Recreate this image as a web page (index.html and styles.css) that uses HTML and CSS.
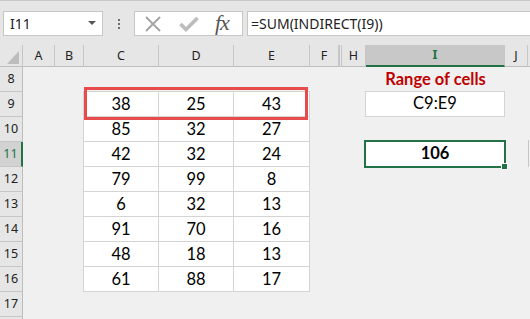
FILE: index.html
```html
<!DOCTYPE html>
<html lang="en">
<head>
	<meta charset="UTF-8">
	<title>INDIRECT range</title>
	<link rel="stylesheet" href="styles.css">
</head>
<body>
	<div class="toolbar">
		<div class="namebox">I11<span class="caret"></span></div>
		<div class="grip"><i></i><i></i><i></i></div>
		<div class="fxbar">
			<svg class="cancel" width="18" height="16" viewBox="0 0 18 16"><path d="M2 1 L16 15 M16 1 L2 15" stroke="#a6a6a6" stroke-width="2" fill="none"/></svg>
			<svg class="enter" width="20" height="16" viewBox="0 0 20 16"><path d="M1.5 8 L7 13.5 L18.5 2" stroke="#bcbcbc" stroke-width="3.6" fill="none"/></svg>
			<span class="fx">fx</span>
		</div>
		<div class="formula">=SUM(INDIRECT(I9))</div>
	</div>

	<div class="heads cols">
		<div class="corner"><span></span></div>
		<div>A</div>
		<div>B</div>
		<div>C</div>
		<div>D</div>
		<div>E</div>
		<div>F</div>
		<div class="hid"></div>
		<div>H</div>
		<div class="sel">I</div>
		<div>J</div>
		<div class="rest"></div>
	</div>

	<div class="sheet cols">
		<div class="rh">8</div>
		<div class="rh">9</div>
		<div class="rh">10</div>
		<div class="rh sel">11</div>
		<div class="rh">12</div>
		<div class="rh">13</div>
		<div class="rh">14</div>
		<div class="rh">15</div>
		<div class="rh">16</div>
		<div class="rh">17</div>
		<div class="rh"></div>

		<div class="data">
			<div>38</div><div>25</div><div>43</div>
			<div>85</div><div>32</div><div>27</div>
			<div>42</div><div>32</div><div>24</div>
			<div>79</div><div>99</div><div>8</div>
			<div>6</div><div>32</div><div>13</div>
			<div>91</div><div>70</div><div>16</div>
			<div>48</div><div>18</div><div>13</div>
			<div>61</div><div>88</div><div>17</div>
		</div>
		<div class="mark"></div>

		<div class="label">Range of cells</div>
		<div class="ref">C9:E9</div>
		<div class="result">106<span class="handle"></span></div>
		<div class="edge"></div>
	</div>
</body>
</html>
```

FILE: styles.css
```css
*{
	box-sizing: border-box;
}
body{
	margin: 0;
	width: 530px;
	height: 319px;
	overflow: hidden;
	background: #f0f0f0;
	font-family: "Noto Sans", "Open Sans", sans-serif;
}

/* formula bar */
.toolbar{
	display: flex;
	align-items: flex-start;
	height: 45px;
	padding: 10px 0 0 3px;
	border-top: 1px solid #c8c8c8;
	background: #e6e6e6;
}
.namebox{
	position: relative;
	width: 100px;
	height: 25px;
	padding: 2px 0 0 6px;
	border: 1px solid #c6c6c6;
	background: #fff;
	font-size: 14px;
	color: #222;
}
.caret{
	position: absolute;
	top: 9px;
	right: 6px;
	border-left: 4px solid transparent;
	border-right: 4px solid transparent;
	border-top: 4px solid #595959;
}
.grip{
	display: flex;
	flex-direction: column;
	gap: 2px;
	margin: 8px 0 0 15px;
}
.grip i{
	width: 2px;
	height: 2px;
	background: #6f6f6f;
}
.fxbar{
	display: flex;
	align-items: center;
	width: 109px;
	height: 25px;
	margin-left: 14px;
	padding-left: 9px;
	border: 1px solid #c6c6c6;
	background: #fff;
}
.enter{
	margin-left: 17px;
}
.fx{
	margin: -2px 0 0 16px;
	font-family: "Liberation Serif", serif;
	font-style: italic;
	font-size: 22px;
	color: #555;
	letter-spacing: -1px;
}
.formula{
	flex: 1;
	height: 25px;
	margin-left: 4px;
	padding: 2px 0 0 3px;
	border: 1px solid #c6c6c6;
	border-right: none;
	background: #fff;
	font-size: 14px;
	color: #222;
}

/* sheet columns */
.cols{
	display: grid;
	grid-template-columns: 23px 32px 29px 75px 75px 76px 29px 3px 24px 139px 23px 1fr;
}
.heads{
	height: 22px;
	background: #e6e6e6;
	border-bottom: 1px solid #bdbdbd;
}
.heads div{
	border-right: 1px solid #c6c6c6;
	text-align: center;
	font-size: 12.5px;
	line-height: 21px;
	color: #222;
}
.heads .hid{
	border-left: 1px solid #c6c6c6;
}
.heads .rest{
	border-right: none;
}
.heads .sel{
	background: #c8c8c8;
	border-bottom: 2px solid #217346;
	color: #217346;
	font-weight: bold;
	line-height: 20px;
}
.corner{
	position: relative;
}
.corner span{
	position: absolute;
	right: 3px;
	bottom: 3px;
	border-left: 12px solid transparent;
	border-bottom: 13px solid #bdbdbd;
}

.sheet{
	grid-template-rows: repeat(11, 25px);
}
.rh{
	grid-column: 1;
	border-right: 1px solid #bdbdbd;
	border-bottom: 1px solid #c6c6c6;
	background: #e6e6e6;
	text-align: center;
	font-size: 12.5px;
	line-height: 24px;
	color: #222;
}
.rh.sel{
	background: #d2d2d2;
	border-right: 2px solid #217346;
	color: #217346;
}

/* data block C9:E16 */
.data{
	grid-column: 4 / 7;
	grid-row: 2 / 10;
	display: grid;
	grid-template-columns: 75px 75px 76px;
	grid-template-rows: repeat(8, 25px);
	margin: -1px 0 0 -1px;
	border-left: 1px solid #d4d4d4;
	border-top: 1px solid #d4d4d4;
	background: #fff;
}
.data div{
	border-right: 1px solid #d4d4d4;
	border-bottom: 1px solid #d4d4d4;
	text-align: center;
	font-family: "Lato", sans-serif;
	font-size: 16.5px;
	line-height: 24px;
	color: #000;
}
.mark{
	grid-column: 4 / 7;
	grid-row: 2;
	margin: -5px 2px -3px 0;
	border: 3px solid #e84b4b;
	z-index: 2;
}

.label{
	grid-column: 10;
	grid-row: 1;
	text-align: center;
	font-family: "Lato", sans-serif;
	font-weight: bold;
	font-size: 16.5px;
	line-height: 24px;
	color: #c00000;
}
.ref{
	grid-column: 10;
	grid-row: 2;
	margin: -1px 0 0 -1px;
	border: 1px solid #d4d4d4;
	background: #fff;
	text-align: center;
	font-family: "Lato", sans-serif;
	font-size: 16.5px;
	line-height: 23px;
	color: #000;
}
.result{
	position: relative;
	grid-column: 10;
	grid-row: 4;
	margin: -2px -1px -1px -2px;
	border: 2px solid #217346;
	background: #fff;
	text-align: center;
	font-family: "Lato", sans-serif;
	font-weight: bold;
	font-size: 16.5px;
	line-height: 23px;
	color: #000;
}
.handle{
	position: absolute;
	right: -4px;
	bottom: -4px;
	width: 7px;
	height: 7px;
	border: 1px solid #fff;
	background: #217346;
}
.edge{
	grid-column: 12;
	grid-row: 4;
	margin-top: -2px;
	border-left: 1px solid #c6c6c6;
}
```
